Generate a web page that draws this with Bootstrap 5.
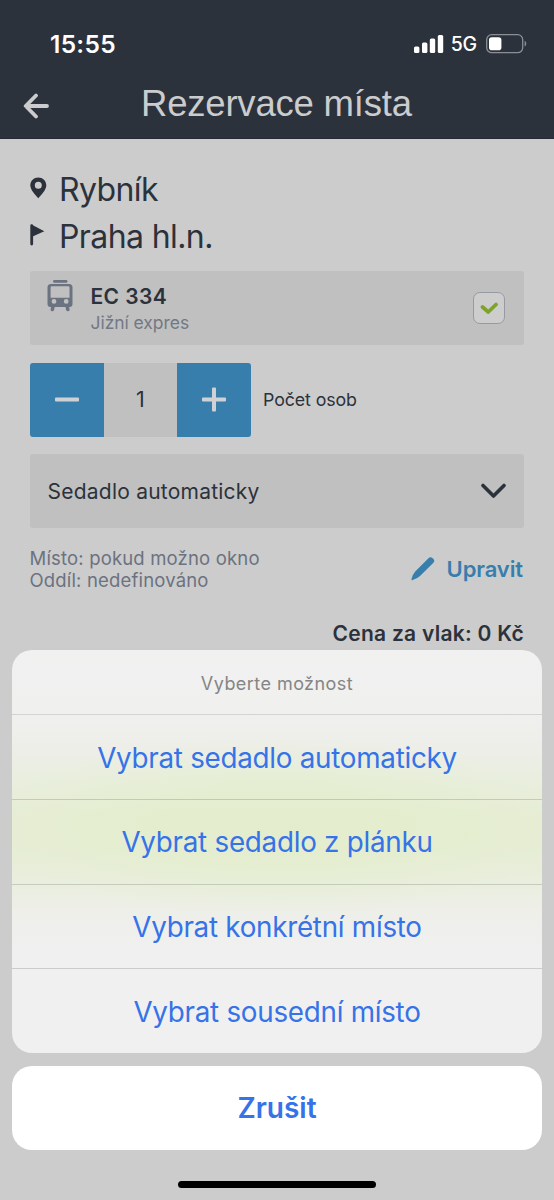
<!DOCTYPE html>
<html lang="cs">
<head>
<meta charset="utf-8">
<meta name="viewport" content="width=device-width, initial-scale=1">
<title>Rezervace místa</title>
<link href="https://cdn.jsdelivr.net/npm/bootstrap@5.3.0/dist/css/bootstrap.min.css" rel="stylesheet">
<style>
  body { background: #ccc; color: #2c323c; font-family: Inter, "Liberation Sans", sans-serif; }
  svg { display: block; flex: none; }
  .screen { width: 554px; height: 1200px; background: #ccc; }
  .topbar { height: 139px; background: #2c323c; border-bottom: 1px solid #252b34; }
  .statusbar { height: 68px; padding: 20px 27px 0 50px; }
  .clock { font-size: 24.5px; font-weight: 600; line-height: 49px; letter-spacing: .3px; }
  .net { font-size: 19.5px; font-weight: 500; line-height: 49px; letter-spacing: -.2px; margin: 0 9px 0 7px; }
  .titlebar { height: 70px; padding-left: 23px; color: #cbccce; }
  .back { margin-top: 6px; }
  .page-title { font: 400 36.5px/70px "Liberation Sans", Arial, sans-serif; letter-spacing: -.2px; margin: 1px 0 0 92px; }
  .content { padding: 27px 30px 0 29.5px; }
  .stop { height: 47px; }
  .stop-icon { width: 29.5px; margin-top: -3px; }
  .stop-name { font-size: 32px; line-height: 47px; letter-spacing: -.6px; font-weight: 400; }
  .tile { height: 74px; background: #c0c0c0; border-radius: 3px; }
  .train-tile { margin-top: 11px; }
  .train-icon { margin: 9px 0 0 17px; }
  .train-text { margin: 13px 0 0 18px; }
  .train-no { font-size: 21px; line-height: 26px; font-weight: 600; letter-spacing: .4px; }
  .train-name { font-size: 17.5px; line-height: 26px; letter-spacing: -.05px; color: #727984; }
  .tick { width: 32px; height: 32px; border: 1px solid #969ba2; border-radius: 7px; background: #cdcdcd; margin-right: 19px; }
  .gap-top { margin-top: 17.5px; }
  .stepper { width: 221.5px; height: 74px; border-radius: 3px; overflow: hidden; background: #c0c0c0; }
  .step { width: 74px; height: 74px; background: #387eac; border: 0; padding: 0; }
  .count { font-size: 21.5px; }
  .count-label { font-size: 17.8px; margin: 2px 0 0 12px; letter-spacing: -.1px; }
  .seat-tile { padding: 0 17px 0 18px; }
  .seat { font-size: 21px; letter-spacing: .23px; margin-top: 2px; }
  .detail-row { margin-top: 18.5px; }
  .detail { font-size: 18.5px; line-height: 22.5px; letter-spacing: .17px; color: #6b7280; }
  .edit { font-size: 22px; font-weight: 600; color: #387eac; text-decoration: none; letter-spacing: -.1px; padding-right: 1px; }
  .price { font-size: 21px; font-weight: 600; line-height: 30px; letter-spacing: .28px; margin-top: 27px; }
  .sheet-wrap { left: 12px; right: 12px; top: 650px; }
  .sheet { border-radius: 20px; overflow: hidden; color: #3673e8;
    background:
      radial-gradient(ellipse 290px 90px at 50% 176px, rgba(225,238,200,.55) 0%, rgba(225,238,200,.5) 45%, rgba(225,238,200,.15) 80%, rgba(225,238,200,0) 100%),
      linear-gradient(180deg, #f1f1f1 0, #f0f0ef 65px, #edeee8 100px, #e9eedd 135px, #e7edd5 165px, #e7edd6 200px, #eaeedf 235px, #eeefea 265px, #f0f0f0 300px, #f0f0f1 403px); }
  .sheet-head { height: 65px; padding-top: 2px; font-size: 18px; letter-spacing: .45px; color: #858585; border-bottom: 1px solid rgba(60,60,67,.16); }
  .choice { height: 84.67px; font-size: 27.8px; letter-spacing: -.27px; border: 0; background: none; color: inherit; padding: 3px 0 0; }
  .choice:first-of-type { height: 84px; }
  .choice + .choice { border-top: 1px solid rgba(60,60,67,.2); }
  .cancel { height: 84px; margin-top: 13px; border: 0; border-radius: 20px; background: #fff; color: #3673e8; font-size: 28px; font-weight: 600; }
  .home-bar { width: 198px; height: 7px; border-radius: 4px; background: #000; left: 178px; top: 1181px; }
</style>
</head>
<body>
<div class="screen position-relative overflow-hidden">
  <header class="topbar">
    <div class="statusbar d-flex justify-content-between text-white">
      <span class="clock">15:55</span>
      <div class="d-flex align-items-center">
        <svg width="30" height="20" viewBox="0 0 30 20" fill="#fff"><rect x="0" y="12.500" width="5.400" height="6.500" rx="1.500"/><rect x="8" y="8.500" width="5.400" height="10.500" rx="1.500"/><rect x="15.800" y="4.500" width="5.400" height="14.500" rx="1.500"/><rect x="23.800" y="1" width="5.400" height="18" rx="1.500"/></svg>
        <span class="net">5G</span>
        <svg width="41" height="20" viewBox="0 0 41 20"><rect x=".7" y=".7" width="36" height="18" rx="5" fill="none" stroke="#8a8f96" stroke-width="1.300"/><rect x="3" y="3.200" width="12.400" height="13" rx="2.800" fill="#fff"/><path d="M38.600 6.800c2.200.8 2.200 5 0 5.800z" fill="#8a8f96"/></svg>
      </div>
    </div>
    <div class="titlebar d-flex align-items-center">
      <svg class="back" width="26" height="26" viewBox="0 0 26 26" fill="none" stroke="#cbccce" stroke-width="3.800" stroke-linecap="round" stroke-linejoin="round"><path d="M24 13H3M13 2.500L2.700 13L13 23.500"/></svg>
      <h1 class="page-title">Rezervace místa</h1>
    </div>
  </header>

  <main class="content">
    <div class="stop d-flex align-items-center">
      <div class="stop-icon"><svg width="17" height="22" viewBox="0 0 17 22"><path fill="#2c323c" fill-rule="evenodd" d="M8.300.5C3.900.5.300 3.900.300 8.200c0 4.800 5.200 9.800 8 13 2.800-3.200 8-8.200 8-13C16.300 3.900 12.700.5 8.300.5zm0 4.200a3.500 3.500 0 1 1 0 7 3.500 3.500 0 0 1 0-7z"/></svg></div>
      <span class="stop-name">Rybník</span>
    </div>
    <div class="stop d-flex align-items-center">
      <div class="stop-icon"><svg width="17" height="22" viewBox="0 0 17 22"><path d="M1.700 1.700V20" stroke="#2c323c" stroke-width="2.800" stroke-linecap="round"/><path fill="#2c323c" d="M1.500.5L14.300 7.300L1.500 13z"/></svg></div>
      <span class="stop-name">Praha hl.n.</span>
    </div>

    <div class="tile train-tile d-flex">
      <svg class="train-icon" width="26" height="32" viewBox="0 0 26 32"><g fill="#6b7280"><rect x="6" y="0" width="14.500" height="2.800" rx="1.400"/><path fill-rule="evenodd" d="M4 4h18a3.500 3.500 0 0 1 3.500 3.500V24a3 3 0 0 1-3 3H3.500a3 3 0 0 1-3-3V7.500A3.500 3.500 0 0 1 4 4zm.8 2.200a1.200 1.200 0 0 0-1.200 1.200v10.400h18.900V7.400a1.200 1.200 0 0 0-1.200-1.200zM7 19a2.400 2.400 0 1 0 0 4.800A2.400 2.400 0 0 0 7 19zm12.200 0a2.400 2.400 0 1 0 0 4.800 2.400 2.400 0 0 0 0-4.800z"/></g><path d="M6 26.500L5.400 29.500M20.200 26.500L20.800 29.500" stroke="#6b7280" stroke-width="3.600" stroke-linecap="round"/></svg>
      <div class="train-text d-flex flex-column">
        <span class="train-no">EC 334</span>
        <span class="train-name">Jižní expres</span>
      </div>
      <span class="tick d-flex align-items-center justify-content-center ms-auto align-self-center">
        <svg width="18" height="13" viewBox="0 0 18 13" fill="none" stroke="#7ba428" stroke-width="3.700" stroke-linecap="round" stroke-linejoin="round"><path d="M2.500 5L8.300 10L16 2.500"/></svg>
      </span>
    </div>

    <div class="gap-top d-flex align-items-center">
      <div class="stepper d-flex">
        <button class="step d-flex align-items-center justify-content-center" aria-label="Ubrat"><svg width="26" height="26" viewBox="0 0 26 26" fill="#cfd2d4"><rect x="1" y="10.500" width="24" height="4" rx="1"/></svg></button>
        <span class="count flex-fill d-flex align-items-center justify-content-center">1</span>
        <button class="step d-flex align-items-center justify-content-center" aria-label="Přidat"><svg width="26" height="26" viewBox="0 0 26 26" fill="#cfd2d4"><rect x="1" y="10.500" width="24" height="4" rx="1"/><rect x="11" y=".5" width="4" height="24" rx="1"/></svg></button>
      </div>
      <span class="count-label">Počet osob</span>
    </div>

    <div class="tile seat-tile gap-top d-flex align-items-center justify-content-between">
      <span class="seat">Sedadlo automaticky</span>
      <svg width="27" height="16" viewBox="0 0 27 16" fill="none" stroke="#2c323c" stroke-width="3.600" stroke-linecap="round" stroke-linejoin="round"><path d="M3 2.500L13.500 13L24 2.500"/></svg>
    </div>

    <div class="detail-row d-flex justify-content-between align-items-center">
      <div class="detail">Místo: pokud možno okno<br>Oddíl: nedefinováno</div>
      <a class="edit d-flex align-items-center" href="#"><svg class="me-2" width="28" height="24" viewBox="0 0 28 24"><path fill="#387eac" d="M17.500 1.300c1.300-1.300 2.700-1.300 3.900-.2l1 1c1.200 1.200 1.200 2.500 0 3.700L9 19Q7 21 1.700 23Q0 23.700.6 21.800Q2 17 4.200 14.600z"/></svg><span>Upravit</span></a>
    </div>
    <div class="price text-end">Cena za vlak: 0 Kč</div>
  </main>

  <div class="sheet-wrap position-absolute d-flex flex-column" role="dialog" aria-label="Vyberte možnost">
    <div class="sheet d-flex flex-column">
      <div class="sheet-head d-flex align-items-center justify-content-center">Vyberte možnost</div>
      <button class="choice">Vybrat sedadlo automaticky</button>
      <button class="choice">Vybrat sedadlo z plánku</button>
      <button class="choice">Vybrat konkrétní místo</button>
      <button class="choice">Vybrat sousední místo</button>
    </div>
    <button class="cancel">Zrušit</button>
  </div>
  <div class="home-bar position-absolute"></div>
</div>
<script src="https://cdn.jsdelivr.net/npm/bootstrap@5.3.0/dist/js/bootstrap.bundle.min.js"></script>
</body>
</html>
